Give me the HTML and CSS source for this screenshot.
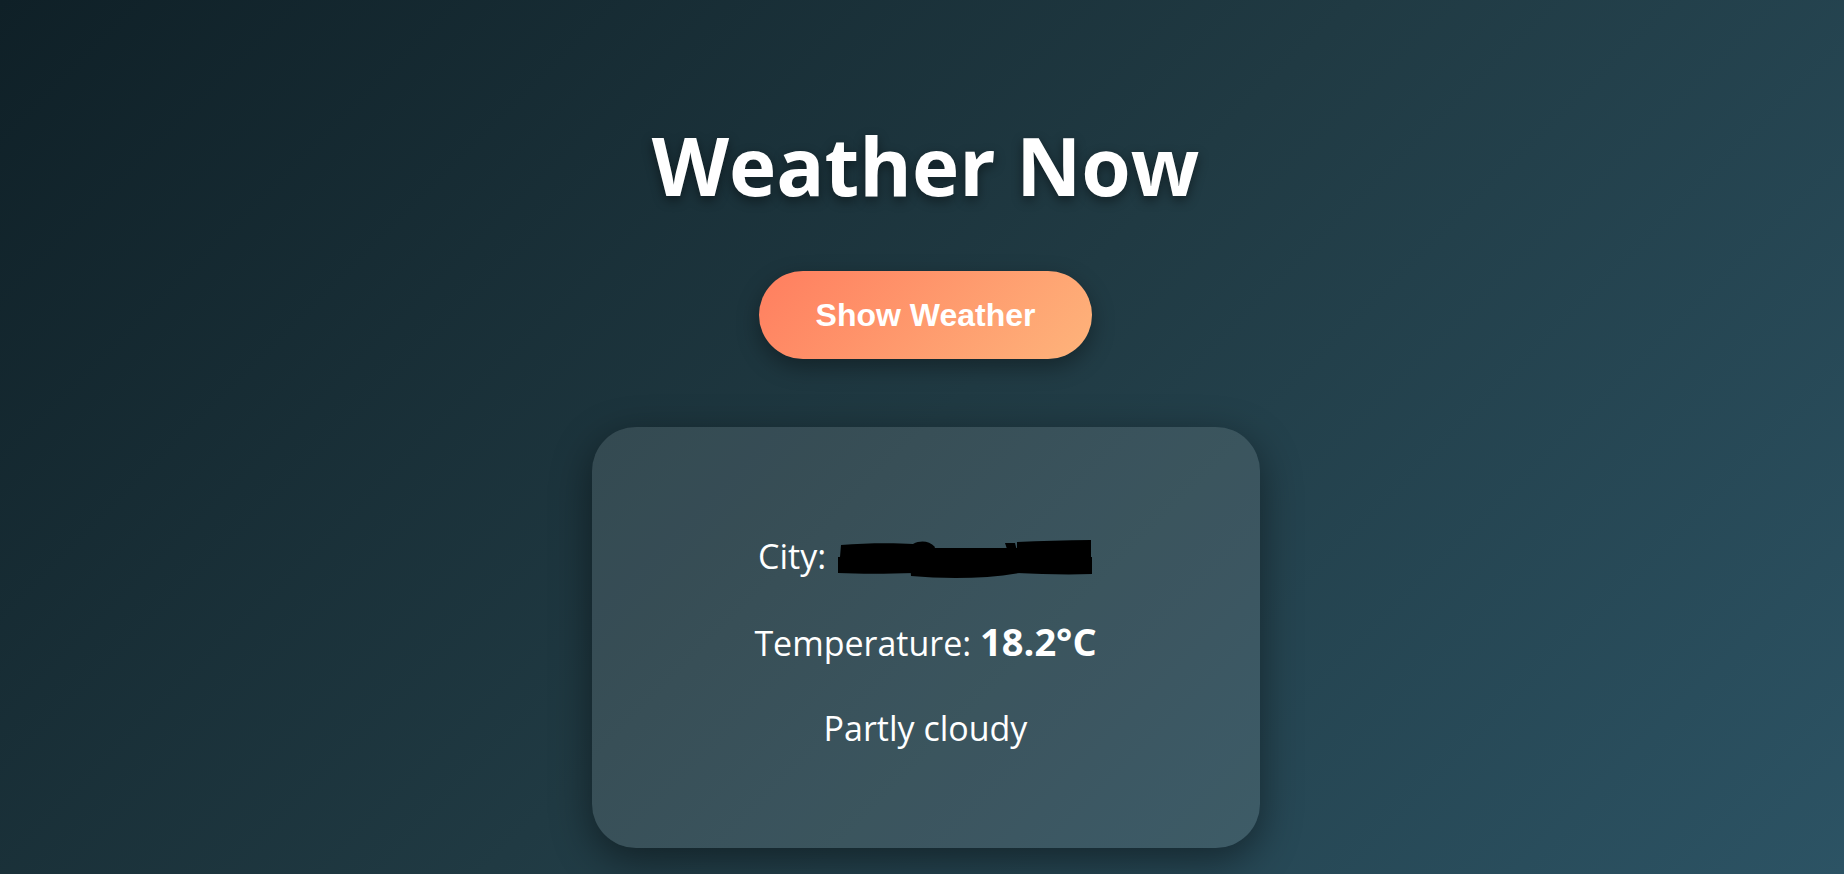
FILE: index.html
```html
<!DOCTYPE html>
<html lang="en">
<head>
    <meta charset="UTF-8">
    <meta name="viewport" content="width=device-width, initial-scale=1.0">
    <title>Weather Now</title>
    <link rel="stylesheet" href="styles.css">
</head>
<body>
    <div class="app">
        <h1 class="title">Weather Now</h1>
        <button class="show-btn" type="button">Show Weather</button>

        <div class="card" id="weather">
            <p class="row">City: <svg class="blackout" width="258" height="40" viewBox="0 0 258 40" aria-hidden="true">
                <!-- marker strokes over the city name -->
                <path d="M6 6 C30 4 60 4 78 5 C86 1 94 2 100 8 L96 18 C60 19 30 18 5 18 Z" fill="#000"/>
                <path d="M3 18 C30 17 55 17 80 18 L80 34 C50 35 25 35 3 34 Z" fill="#000"/>
                <path d="M74 9 L184 9 L184 34 C150 40 110 40 76 37 Z" fill="#000"/>
                <path d="M182 3 C205 2 230 1 256 1 L256 18 L182 19 Z" fill="#000"/>
                <path d="M182 18 L257 18 L257 35 C230 36 205 35 182 34 Z" fill="#000"/>
                <path d="M170 4 L180 4 L182 12 L172 10 Z" fill="#000"/>
            </svg></p>
            <p class="row">Temperature: <span class="temp">18.2°C</span></p>
            <p class="row">Partly cloudy</p>
        </div>
    </div>
</body>
</html>
```

FILE: styles.css
```css
body {
    margin: 0;
    padding: 0 0 0 7px;
    min-height: 100vh;
    font-family: "Open Sans", "Noto Sans", sans-serif;
    color: #fff;
    background: linear-gradient(135deg, #0f2027, #203a43, #2c5364);
    overflow: hidden;
}

.app {
    display: flex;
    flex-direction: column;
    align-items: center;
}

.title {
    margin: 125px 0 0;
    font-size: 80px;
    line-height: 80px;
    font-weight: 700;
    text-shadow: 0 4px 12px rgba(0, 0, 0, 0.45);
}

.show-btn {
    margin-top: 66px;
    padding: 25px 57px;
    font-family: "Liberation Sans", Arial, sans-serif;
    font-size: 32px;
    line-height: 38px;
    font-weight: 700;
    color: #fff;
    border: none;
    border-radius: 50px;
    background: linear-gradient(135deg, #ff7e5f, #feb47b);
    box-shadow: 0 8px 22px rgba(0, 0, 0, 0.35);
    cursor: pointer;
}

.card {
    margin-top: 68px;
    width: 668px;
    box-sizing: border-box;
    padding: 105px 40px 96px;
    display: flex;
    flex-direction: column;
    gap: 37px;
    text-align: center;
    background: rgba(255, 255, 255, 0.11);
    border-radius: 44px;
    box-shadow: 0 12px 40px rgba(0, 0, 0, 0.45);
}

.row {
    margin: 0;
    font-size: 34px;
    line-height: 48px;
}

.temp {
    font-size: 38px;
    font-weight: 700;
}

.blackout {
    vertical-align: -10px;
}
```
